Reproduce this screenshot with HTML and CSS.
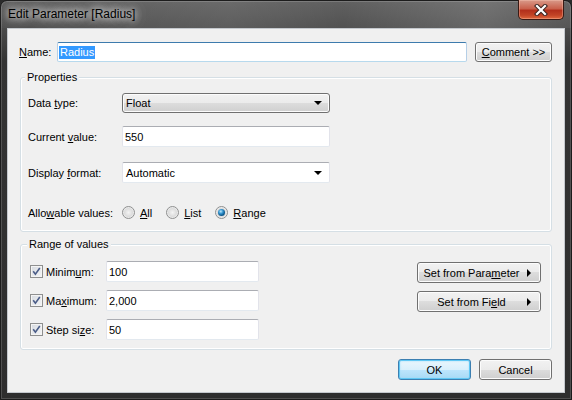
FILE: index.html
```html
<!DOCTYPE html>
<html lang="en">
<head>
  <meta charset="UTF-8">
  <title>Edit Parameter [Radius]</title>
  <link rel="stylesheet" href="styles.css">
</head>
<body>
  <div class="window">
    <div class="titlebar">
      <span class="title">Edit Parameter [Radius]</span>
      <button class="close-btn" title="Close">
        <svg width="14" height="12" viewBox="0 0 14 12">
          <path d="M3 2 L11 10 M11 2 L3 10" stroke="#3b2420" stroke-width="4.2" stroke-linecap="square"/>
          <path d="M3 2 L11 10 M11 2 L3 10" stroke="#fff" stroke-width="2.2" stroke-linecap="square"/>
        </svg>
      </button>
    </div>

    <div class="client">
      <div class="name-row">
        <label class="name-label"><u>N</u>ame:</label>
        <div class="textbox name-box"><span class="selection">Radius</span></div>
        <button class="btn comment-btn"><u>C</u>omment &gt;&gt;</button>
      </div>

      <fieldset class="group props">
        <legend>Properties</legend>
        <div class="field-row">
          <span class="field-label">Data <u>t</u>ype:</span>
          <div class="combo combo-list"><span>Float</span><span class="arrow-down"></span></div>
        </div>
        <div class="field-row row-value">
          <span class="field-label">Current <u>v</u>alue:</span>
          <div class="textbox field-box">550</div>
        </div>
        <div class="field-row row-format">
          <span class="field-label">Display <u>f</u>ormat:</span>
          <div class="combo combo-edit"><span>Automatic</span><span class="arrow-down"></span></div>
        </div>
        <div class="field-row row-allowable">
          <span class="field-label">Allo<u>w</u>able values:</span>
          <div class="radios">
            <label class="option"><span class="radio"></span><span><u>A</u>ll</span></label>
            <label class="option"><span class="radio"></span><span><u>L</u>ist</span></label>
            <label class="option"><span class="radio checked"></span><span><u>R</u>ange</span></label>
          </div>
        </div>
      </fieldset>

      <fieldset class="group range">
        <legend>Range of values</legend>
        <div class="range-body">
          <div class="range-rows">
            <div class="range-row">
              <label class="check-label"><span class="check"><svg width="11" height="11" viewBox="0 0 11 11"><path d="M2.2 5.2 L4.4 8.2 L8.8 2" fill="none" stroke="#4b5d88" stroke-width="1.6"/></svg></span><span>Minim<u>u</u>m:</span></label>
              <div class="textbox range-box">100</div>
            </div>
            <div class="range-row">
              <label class="check-label"><span class="check"><svg width="11" height="11" viewBox="0 0 11 11"><path d="M2.2 5.2 L4.4 8.2 L8.8 2" fill="none" stroke="#4b5d88" stroke-width="1.6"/></svg></span><span>Ma<u>x</u>imum:</span></label>
              <div class="textbox range-box">2,000</div>
            </div>
            <div class="range-row">
              <label class="check-label"><span class="check"><svg width="11" height="11" viewBox="0 0 11 11"><path d="M2.2 5.2 L4.4 8.2 L8.8 2" fill="none" stroke="#4b5d88" stroke-width="1.6"/></svg></span><span>Step si<u>z</u>e:</span></label>
              <div class="textbox range-box">50</div>
            </div>
          </div>
          <div class="range-actions">
            <button class="btn menu-btn"><span class="btn-text">Set from Para<u>m</u>eter</span><span class="arrow-right"></span></button>
            <button class="btn menu-btn"><span class="btn-text">Set from Fi<u>e</u>ld</span><span class="arrow-right"></span></button>
          </div>
        </div>
      </fieldset>

      <div class="dialog-buttons">
        <button class="btn btn-default">OK</button>
        <button class="btn">Cancel</button>
      </div>
    </div>
  </div>
</body>
</html>
```

FILE: styles.css
```css
* {
  margin: 0;
  padding: 0;
  box-sizing: border-box;
}

body {
  font-family: "Liberation Sans", Arial, sans-serif;
  font-size: 11px;
  color: #000;
  background: #2a2a2a;
}

u {
  text-decoration: underline;
  text-underline-offset: 1px;
}

/* window frame */
.window {
  width: 572px;
  height: 400px;
  display: flex;
  flex-direction: column;
  background: linear-gradient(#5a5a5a 0, #4a4a4a 28px, #343434 60px, #2e2e2e 100%);
  border: 1px solid #1c1c1c;
  border-radius: 7px 7px 0 0;
  box-shadow: inset 0 0 0 1px rgba(255, 255, 255, 0.16);
}

.titlebar {
  height: 27px;
  display: flex;
  background: linear-gradient(90deg, rgba(255,255,255,0.02) 0%, rgba(255,255,255,0.10) 40%, rgba(255,255,255,0.04) 60%, rgba(255,255,255,0.16) 85%, rgba(255,255,255,0.06) 100%);
  border-radius: 6px 6px 0 0;
}

.title {
  padding-left: 7px;
  line-height: 27px;
  font-size: 12px;
  color: #000;
  text-shadow: 0 0 6px rgba(255, 255, 255, 0.95), 0 0 12px rgba(255, 255, 255, 0.8), 0 0 16px rgba(255, 255, 255, 0.6);
}

.close-btn {
  margin: -1px 7px 0 auto;
  width: 46px;
  height: 20px;
  display: flex;
  align-items: center;
  justify-content: center;
  border: 1px solid #3a1a14;
  border-top: none;
  border-radius: 0 0 5px 5px;
  background: linear-gradient(#d99a8a 0%, #c9614c 45%, #b3301c 55%, #c24426 80%, #e0683e 100%);
  box-shadow: inset 0 0 0 1px rgba(255, 210, 190, 0.35);
}

/* client area */
.client {
  flex: 1;
  margin: 0 6px 6px;
  border: 1px solid #c4c8cd;
  background: #f0f0f0;
  padding: 13px 12px 0 11px;
}

.name-row {
  display: flex;
  align-items: center;
  height: 20px;
}

.name-label {
  width: 38px;
}

/* controls */
.textbox {
  height: 21px;
  display: flex;
  align-items: center;
  padding-left: 2px;
  background: #fff;
  border: 1px solid;
  border-color: #abadb3 #e2e3ea #e3e9ef #e2e3ea;
  border-radius: 2px;
}

.name-box {
  width: 410px;
  height: 20px;
  border-color: #3d7bad #b5cfe7 #b7d9ed #b5cfe7;
  padding-left: 1px;
}

.selection {
  background: #3399ff;
  color: #fff;
  line-height: 13px;
  padding: 0 1px;
}

.btn {
  font: inherit;
  color: #000;
  height: 21px;
  border: 1px solid #707070;
  border-radius: 3px;
  background: linear-gradient(#f2f2f2 0%, #ebebeb 50%, #dddddd 50%, #cfcfcf 100%);
  box-shadow: inset 0 0 0 1px #fcfcfc;
}

.comment-btn {
  width: 77px;
  height: 20px;
  margin-left: 8px;
}

.btn-default {
  border-color: #3c7fb1;
  background: linear-gradient(#eaf6fd 0%, #d9f0fc 50%, #bee6fd 50%, #a7d9f5 100%);
  box-shadow: inset 0 0 0 1px #5fc7f4, inset 0 0 2px 1px #9fdcf8;
}

.arrow-down {
  margin-left: auto;
  margin-right: 7px;
  width: 0;
  height: 0;
  border-left: 4px solid transparent;
  border-right: 4px solid transparent;
  border-top: 4px solid #000;
}

.arrow-right {
  width: 0;
  height: 0;
  margin: 0 9px 0 2px;
  border-top: 4px solid transparent;
  border-bottom: 4px solid transparent;
  border-left: 4px solid #000;
}

.combo {
  width: 208px;
  height: 21px;
  display: flex;
  align-items: center;
  padding-left: 3px;
}

.combo-list {
  height: 20px;
  border: 1px solid #707070;
  border-radius: 3px;
  background: linear-gradient(#f2f2f2 0%, #ebebeb 50%, #dddddd 50%, #cfcfcf 100%);
  box-shadow: inset 0 0 0 1px #fcfcfc;
}

.combo-edit {
  background: #fff;
  border: 1px solid;
  border-color: #abadb3 #e2e3ea #e3e9ef #e2e3ea;
  border-radius: 2px;
}

/* group boxes */
.group {
  margin-left: 1px;
  border: 1px solid #d5dfe5;
  border-radius: 3px;
  box-shadow: inset 0 0 0 1px #fff;
  min-width: 0;
}

.group legend {
  margin-left: -3px;
  padding: 0 2px;
  line-height: 13px;
  background: #f0f0f0;
}

.props {
  margin-top: 9px;
  padding: 9px 7px 8px;
}

.field-row {
  display: flex;
  align-items: center;
  height: 20px;
}

.row-value {
  margin-top: 13px;
  height: 21px;
}

.row-format {
  margin-top: 15px;
  height: 21px;
}

.row-allowable {
  margin-top: 19px;
  height: 21px;
}

.field-label {
  width: 94px;
}

.field-box {
  width: 208px;
}

.radios {
  display: flex;
  align-items: center;
}

.option {
  display: flex;
  align-items: center;
  gap: 5px;
  margin-right: 14px;
}

.radio {
  width: 13px;
  height: 13px;
  border-radius: 50%;
  border: 1px solid #8e8f8f;
  background: radial-gradient(circle at 50% 50%, #f4f4f4 0, #dcdcdc 4px, #f6f6f6 6px);
  display: flex;
  align-items: center;
  justify-content: center;
}

.radio.checked::after {
  content: "";
  width: 7px;
  height: 7px;
  border-radius: 50%;
  background: radial-gradient(circle at 40% 35%, #bfe8fb 0, #3a9ad4 2px, #0d5a8e 4px);
}

.range {
  margin-top: 6px;
  padding: 10px 10px 9px 9px;
}

.range-body {
  display: flex;
  justify-content: space-between;
}

.range-rows {
  display: flex;
  flex-direction: column;
  gap: 8px;
}

.range-row {
  display: flex;
  align-items: center;
  height: 21px;
}

.check-label {
  width: 76px;
  display: flex;
  align-items: center;
  gap: 3px;
}

.check {
  width: 13px;
  height: 13px;
  border: 1px solid #8e8f8f;
  background: linear-gradient(135deg, #d6dae0, #f4f5f6);
  box-shadow: inset 0 0 0 1px #f4f4f4;
  display: flex;
  align-items: center;
  justify-content: center;
}

.range-box {
  width: 153px;
}

.range-actions {
  padding-top: 1px;
  display: flex;
  flex-direction: column;
  gap: 8px;
}

.menu-btn {
  width: 124px;
  display: flex;
  align-items: center;
}

.btn-text {
  flex: 1;
  text-align: center;
}

.dialog-buttons {
  margin-top: 9px;
  display: flex;
  justify-content: flex-end;
  gap: 8px;
}

.dialog-buttons .btn {
  width: 73px;
}
```
